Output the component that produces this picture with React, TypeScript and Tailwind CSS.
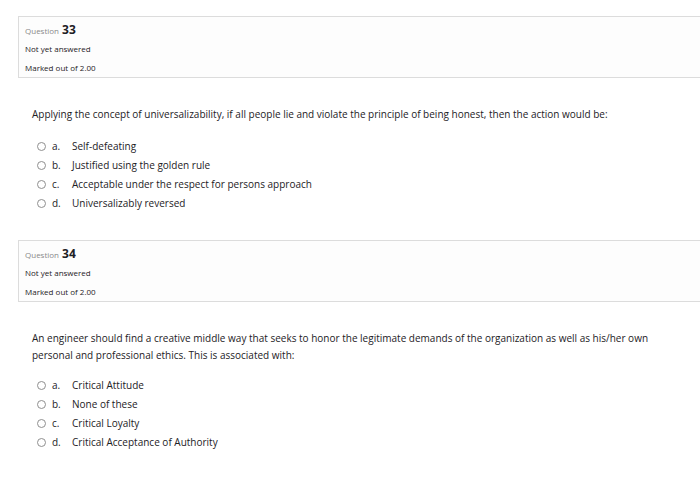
import React from "react";

type Q = {
  num: number;
  text: string[];
  options: { key: string; label: string }[];
};

const questions: Q[] = [
  {
    num: 33,
    text: [
      "Applying the concept of universalizability, if all people lie and violate the principle of being honest, then the action would be:",
    ],
    options: [
      { key: "a.", label: "Self-defeating" },
      { key: "b.", label: "Justified using the golden rule" },
      { key: "c.", label: "Acceptable under the respect for persons approach" },
      { key: "d.", label: "Universalizably reversed" },
    ],
  },
  {
    num: 34,
    text: [
      "An engineer should find a creative middle way that seeks to honor the legitimate demands of the organization as well as his/her own",
      "personal and professional ethics. This is associated with:",
    ],
    options: [
      { key: "a.", label: "Critical Attitude" },
      { key: "b.", label: "None of these" },
      { key: "c.", label: "Critical Loyalty" },
      { key: "d.", label: "Critical Acceptance of Authority" },
    ],
  },
];

function InfoBox({ num }: { num: number }) {
  return (
    <div className="ml-[18px] -mr-4 h-[62px] border border-[#dcdcdc] bg-[#fdfdfd] pl-[6px] pt-[5px] text-[#1d2125]">
      <div className="flex items-baseline gap-[3px] leading-[16px]">
        <span className="text-[8px] text-[#8a8a8a]">Question</span>
        <span className="text-[12px] font-bold">{num}</span>
      </div>
      <p className="mt-[1px] text-[8px] leading-[18px]">Not yet answered</p>
      <p className="text-[8px] leading-[19px]">Marked out of 2.00</p>
    </div>
  );
}

function Radio() {
  return (
    <span className="inline-block h-[9px] w-[9px] rounded-full border border-[#8f8f8f] bg-white" />
  );
}

function QuestionBlock({ q, textTop, optTop }: { q: Q; textTop: string; optTop: string }) {
  return (
    <div className="pl-[32px] text-[#1d2125]">
      <div className={`${textTop} text-[10px] leading-[17px]`}>
        {q.text.map((t) => (
          <p key={t}>{t}</p>
        ))}
      </div>
      <ul className={`${optTop} text-[10px]`}>
        {q.options.map((o) => (
          <li key={o.key} className="flex h-[19px] items-center pl-[5px]">
            <Radio />
            <span className="ml-[6px] w-[20px]">{o.key}</span>
            <span>{o.label}</span>
          </li>
        ))}
      </ul>
    </div>
  );
}

export default function App() {
  return (
    <div
      className="h-[479px] w-[700px] overflow-hidden bg-white pt-[16px]"
      style={{ fontFamily: '"Open Sans", "Noto Sans", sans-serif' }}
    >
      <InfoBox num={33} />
      <QuestionBlock q={questions[0]} textTop="mt-[28px]" optTop="mt-[14px]" />
      <div className="mt-[27px]">
        <InfoBox num={34} />
      </div>
      <QuestionBlock q={questions[1]} textTop="mt-[28px]" optTop="mt-[12px]" />
    </div>
  );
}
